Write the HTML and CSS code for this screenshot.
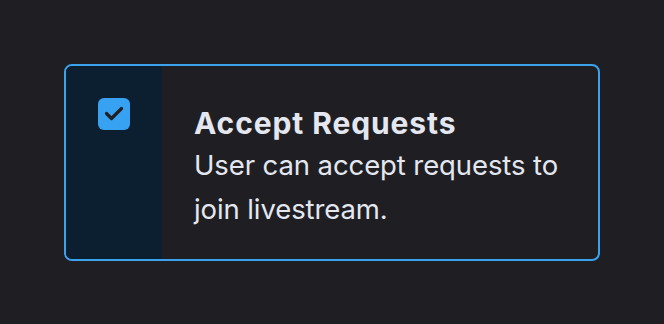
FILE: index.html
```html
<!DOCTYPE html>
<html>
<head>
<meta charset="utf-8">
<link rel="stylesheet" href="styles.css">
</head>
<body>
<div class="page">
  <label class="card">
    <div class="side">
      <span class="checkbox">
        <svg width="32" height="32" viewBox="0 0 32 32"><path d="M8.5 15.5 L13.5 20.5 L23.5 10.5" fill="none" stroke="#1f2024" stroke-width="3.2" stroke-linecap="round" stroke-linejoin="round"/></svg>
      </span>
    </div>
    <div class="content">
      <div class="title">Accept Requests</div>
      <div class="desc">User can accept requests to join livestream.</div>
    </div>
  </label>
</div>
</body>
</html>
```
FILE: styles.css
```css
html, body {
  margin: 0;
  padding: 0;
  background: #1f1f23;
  width: 664px;
  height: 324px;
  overflow: hidden;
}
.page {
  padding: 64px;
}
.card {
  display: flex;
  width: 536px;
  box-sizing: border-box;
  border: 2px solid #3ba2ee;
  border-radius: 8px;
  overflow: hidden;
  background: #1f1f23;
  font-family: Inter, "Noto Sans", sans-serif;
  color: #e4e7ef;
}
.side {
  width: 96px;
  flex: none;
  background: #0c1f30;
  padding: 32px;
  box-sizing: border-box;
}
.checkbox {
  display: block;
  width: 32px;
  height: 32px;
  border-radius: 6px;
  background: #38a2f2;
}
.checkbox svg { display: block; }
.content {
  padding: 37px 28px 28px 32px;
}
.title {
  font-size: 30px;
  line-height: 40px;
  font-weight: 700;
  letter-spacing: 0.9px;
}
.desc {
  font-size: 27.5px;
  line-height: 44px;
  letter-spacing: -0.1px;
}
```
